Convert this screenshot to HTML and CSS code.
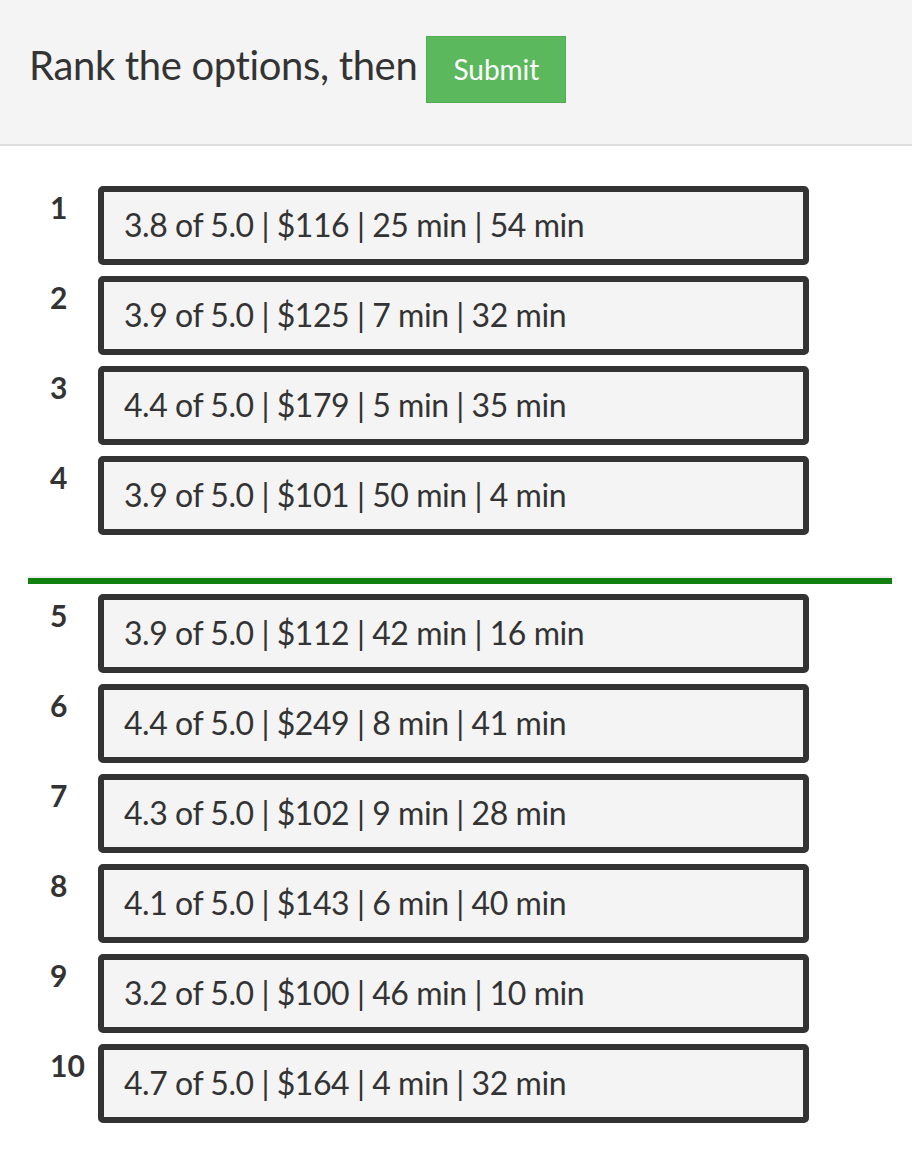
FILE: index.html
```html
<!DOCTYPE html>
<html>
<head>
    <title>Rank the options</title>
    <meta charset="UTF-8">
    <link rel="stylesheet" href="styles.css">
</head>
<body>
    <div class="top-bar">
        <h1>Rank the options, then</h1>
        <button class="submit-btn">Submit</button>
    </div>

    <div class="ranking">
        <div class="rank-row"><span class="rank-num">1</span><div class="option-box">3.8 of 5.0 | $116 | 25 min | 54 min</div></div>
        <div class="rank-row"><span class="rank-num">2</span><div class="option-box">3.9 of 5.0 | $125 | 7 min | 32 min</div></div>
        <div class="rank-row"><span class="rank-num">3</span><div class="option-box">4.4 of 5.0 | $179 | 5 min | 35 min</div></div>
        <div class="rank-row"><span class="rank-num">4</span><div class="option-box">3.9 of 5.0 | $101 | 50 min | 4 min</div></div>

        <div class="cutoff"></div>

        <div class="rank-row"><span class="rank-num">5</span><div class="option-box">3.9 of 5.0 | $112 | 42 min | 16 min</div></div>
        <div class="rank-row"><span class="rank-num">6</span><div class="option-box">4.4 of 5.0 | $249 | 8 min | 41 min</div></div>
        <div class="rank-row"><span class="rank-num">7</span><div class="option-box">4.3 of 5.0 | $102 | 9 min | 28 min</div></div>
        <div class="rank-row"><span class="rank-num">8</span><div class="option-box">4.1 of 5.0 | $143 | 6 min | 40 min</div></div>
        <div class="rank-row"><span class="rank-num">9</span><div class="option-box">3.2 of 5.0 | $100 | 46 min | 10 min</div></div>
        <div class="rank-row"><span class="rank-num">10</span><div class="option-box">4.7 of 5.0 | $164 | 4 min | 32 min</div></div>
    </div>
</body>
</html>
```

FILE: styles.css
```css
body {
    margin: 0;
    font-family: Lato, "Open Sans", sans-serif;
    color: #333;
    background: #fff;
}

.top-bar {
    display: flex;
    align-items: baseline;
    gap: 9px;
    padding: 36px 28px 41px 29px;
    background-color: #f4f4f4;
    border-bottom: 2px solid #ddd;
}
.top-bar h1 {
    margin: 0;
    font-size: 40px;
    font-weight: normal;
    line-height: 48px;
    letter-spacing: -0.35px;
}
.submit-btn {
    font-family: Lato, "Open Sans", sans-serif;
    font-size: 28px;
    line-height: 39px;
    padding: 13px 26px;
    color: #fff;
    background-color: #5cb85c;
    border: 1px solid #4cae4c;
    border-radius: 0;
}

.ranking {
    padding: 40px 20px 20px 28px;
}
.rank-row {
    display: flex;
    align-items: flex-start;
    margin-bottom: 11px;
    padding-left: 22px;
}
.rank-num {
    width: 48px;
    padding-top: 3px;
    font-size: 30px;
    font-weight: bold;
    line-height: 1.2;
}
.option-box {
    box-sizing: border-box;
    width: 711px;
    height: 79px;
    display: flex;
    align-items: center;
    padding: 0 0 2px 20px;
    font-size: 32px;
    letter-spacing: -0.45px;
    background-color: #f4f4f4;
    border: 6px solid #333;
    border-radius: 5px;
}

.cutoff {
    height: 6px;
    margin: 41px 0 10px 0;
    background-color: #108010;
    border-top: 2px solid #eee;
}
```
